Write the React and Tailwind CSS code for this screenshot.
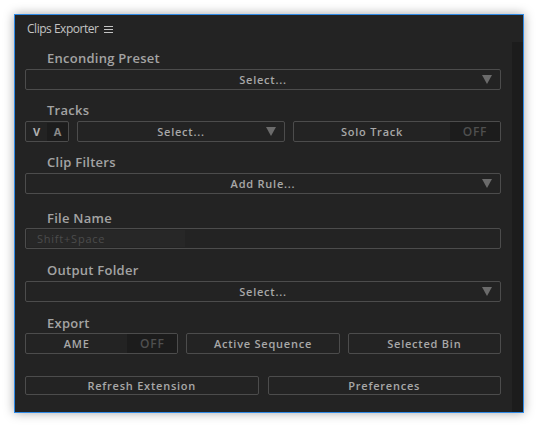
import React, { useState } from "react";

const Arrow = () => (
  <svg width="10" height="9" viewBox="0 0 10 9" className="shrink-0">
    <path d="M0 0 H10 L5 9 Z" fill="#6b6b6b" />
  </svg>
);

const Menu = () => (
  <svg width="9" height="9" viewBox="0 0 9 9" className="shrink-0">
    <path d="M0 1.5 H9 M0 4.5 H9 M0 7.5 H9" stroke="#c4c4c4" strokeWidth="1" />
  </svg>
);

const Label = ({ children, className = "" }) => (
  <div
    className={`pl-[22px] h-[16px] leading-[16px] text-[13px] font-semibold text-[#a3a3a3] tracking-[0.02em] ${className}`}
  >
    {children}
  </div>
);

// dropdown with centered caption and a small triangle on the right
const Dropdown = ({ text, className = "" }) => (
  <div
    className={`relative flex items-center justify-center h-[21px] pt-[1px] border border-[#4c4c4c] rounded-[2px] text-[11px] font-semibold tracking-[0.07em] text-[#a8a8a8] ${className}`}
  >
    <span>{text}</span>
    <div className="absolute right-[8px] top-[5px]">
      <Arrow />
    </div>
  </div>
);

const Toggle = ({ text, on, onClick }) => (
  <button
    onClick={onClick}
    className="flex-1 flex h-[21px] border border-[#4c4c4c] rounded-[2px] overflow-hidden text-[11px] font-semibold tracking-[0.07em]"
  >
    <span className="flex-1 flex items-center justify-center pt-[1px] text-[#a8a8a8]">
      {text}
    </span>
    <span className="w-[50px] flex items-center justify-center pt-[1px] bg-[#1c1c1c] text-[#4f4f4f] text-[12px]">
      {on ? "ON" : "OFF"}
    </span>
  </button>
);

const Button = ({ text, className = "" }) => (
  <button
    className={`flex-1 flex items-center justify-center pt-[1px] border border-[#4c4c4c] rounded-[2px] text-[11px] font-semibold tracking-[0.07em] text-[#a8a8a8] ${className}`}
  >
    {text}
  </button>
);

export default function App() {
  const [solo, setSolo] = useState(false);
  const [ame, setAme] = useState(false);
  const [fileName, setFileName] = useState("");

  return (
    <div
      className="w-[538px] h-[427px] bg-white p-[14px]"
      style={{ fontFamily: '"Open Sans", "Liberation Sans", sans-serif' }}
    >
      <div className="w-full h-full flex flex-col border border-[#2f8ae6] bg-[#232323] shadow-[0_0_10px_rgba(0,0,0,0.35)]">
        {/* panel header */}
        <div className="h-[27px] flex items-center pl-[12px] pt-[1px] text-[12px] tracking-[-0.04em] text-[#c4c4c4]">
          <span>Clips Exporter</span>
          <span className="ml-[6px]">
            <Menu />
          </span>
        </div>

        <div className="flex-1 flex">
          <div className="flex-1 pl-[10px] pr-[11px] pt-[8px]">
            <Label>Enconding Preset</Label>
            <Dropdown text="Select..." className="mt-[3px]" />

            <Label className="mt-[12px]">Tracks</Label>
            <div className="mt-[3px] flex gap-[8px] h-[21px]">
              <div className="w-[44px] flex border border-[#4c4c4c] rounded-[2px] overflow-hidden text-[11px] font-bold pt-[1px]">
                <span className="flex-1 flex items-center justify-center text-[#b0b0b0]">V</span>
                <span className="flex-1 flex items-center justify-center bg-[#1c1c1c] text-[#8a8a8a]">A</span>
              </div>
              <Dropdown text="Select..." className="flex-1" />
              <Toggle text="Solo Track" on={solo} onClick={() => setSolo(!solo)} />
            </div>

            <Label className="mt-[12px]">Clip Filters</Label>
            <Dropdown text="Add Rule..." className="mt-[3px]" />

            <Label className="mt-[16px]">File Name</Label>
            <div className="mt-[2px] h-[21px] flex border border-[#4c4c4c] rounded-[2px] p-[1px]">
              <input
                value={fileName}
                onChange={(e) => setFileName(e.target.value)}
                placeholder="Shift+Space"
                className="w-[158px] h-[17px] leading-[17px] bg-[#272727] pl-[10px] text-[11px] tracking-[0.07em] text-[#a8a8a8] placeholder:text-[#4c4c4c] outline-none"
              />
            </div>

            <Label className="mt-[13px]">Output Folder</Label>
            <Dropdown text="Select..." className="mt-[3px]" />

            <Label className="mt-[13px]">Export</Label>
            <div className="mt-[2px] flex gap-[8px] h-[21px]">
              <Toggle text="AME" on={ame} onClick={() => setAme(!ame)} />
              <Button text="Active Sequence" />
              <Button text="Selected Bin" />
            </div>

            <div className="mt-[22px] flex gap-[9px] h-[19px]">
              <Button text="Refresh Extension" />
              <Button text="Preferences" />
            </div>
          </div>

          {/* scrollbar track */}
          <div className="w-[11px] bg-[#1c1c1c]" />
        </div>
      </div>
    </div>
  );
}
